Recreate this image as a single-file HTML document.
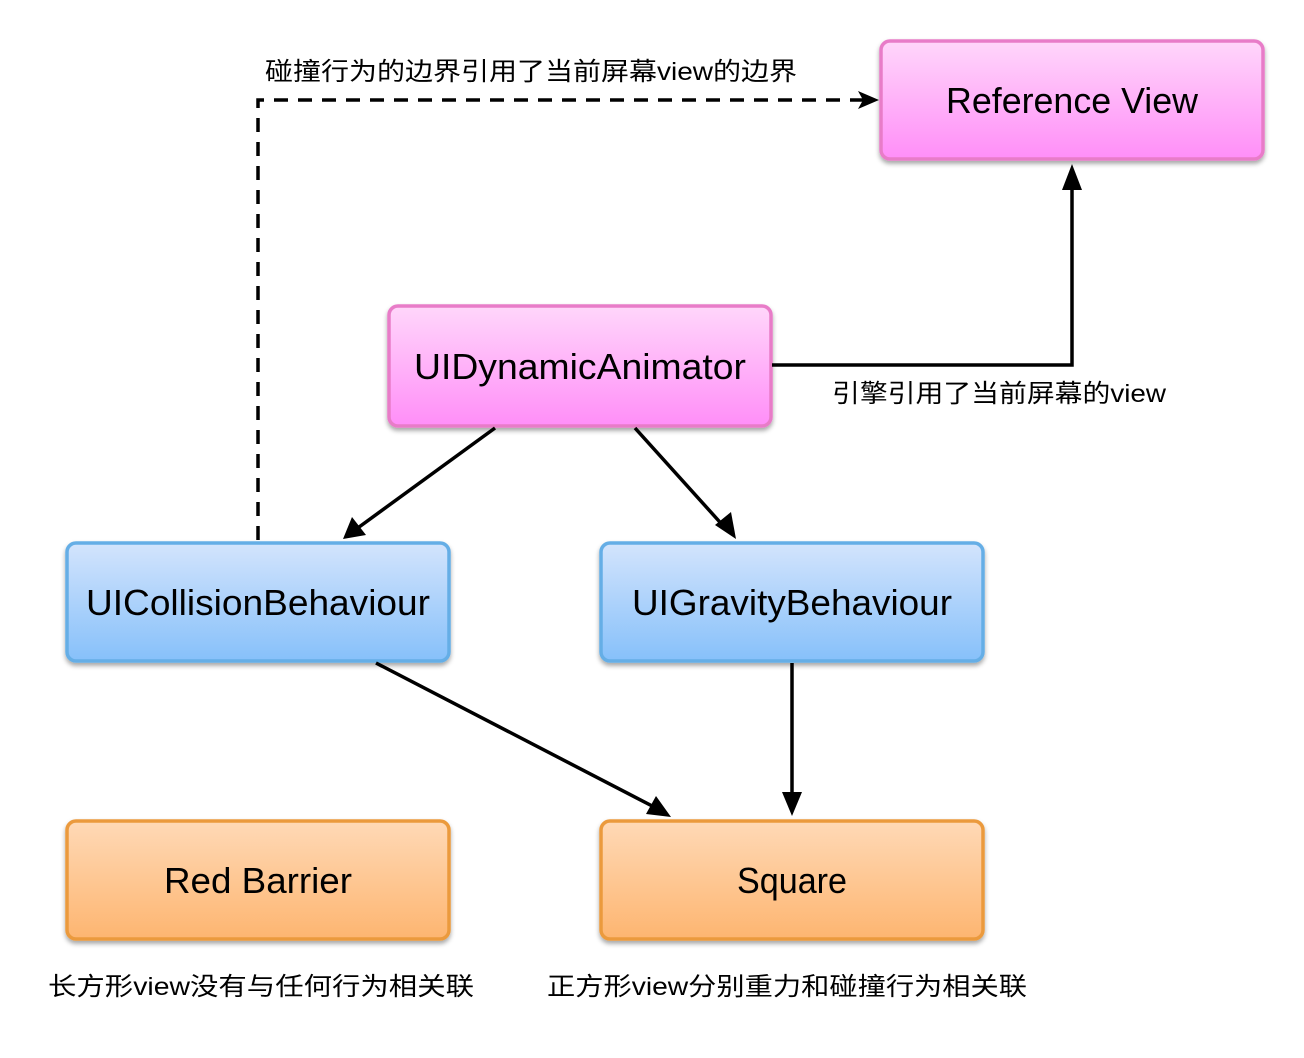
<!DOCTYPE html>
<html><head><meta charset="utf-8"><style>
html,body{margin:0;padding:0;background:#fff;}
svg{display:block;}
.t{font-family:"Liberation Sans",sans-serif;font-size:36px;fill:#000;}
.c{font-family:"Liberation Sans","Noto Sans CJK SC",sans-serif;font-size:25px;fill:#000;}
</style></head><body>
<svg width="1304" height="1058" viewBox="0 0 1304 1058">
<defs>
<linearGradient id="pk" x1="0" y1="0" x2="0" y2="1"><stop offset="0" stop-color="#ffd6fa"/><stop offset="1" stop-color="#ff8ef8"/></linearGradient>
<linearGradient id="bl" x1="0" y1="0" x2="0" y2="1"><stop offset="0" stop-color="#d3e4fc"/><stop offset="1" stop-color="#86c0fa"/></linearGradient>
<linearGradient id="or" x1="0" y1="0" x2="0" y2="1"><stop offset="0" stop-color="#ffd9b6"/><stop offset="1" stop-color="#fdb570"/></linearGradient>
<filter id="sh" x="-10%" y="-10%" width="120%" height="130%"><feDropShadow dx="0" dy="3" stdDeviation="2.5" flood-color="#000" flood-opacity="0.35"/></filter>
</defs>
<g filter="url(#sh)" stroke-width="3.5">
<rect x="881" y="41" width="382" height="118" rx="9" fill="url(#pk)" stroke="#e87cc8"/>
<rect x="389" y="306" width="382" height="120" rx="9" fill="url(#pk)" stroke="#e87cc8"/>
<rect x="67" y="543" width="382" height="118" rx="9" fill="url(#bl)" stroke="#65aee6"/>
<rect x="601" y="543" width="382" height="118" rx="9" fill="url(#bl)" stroke="#65aee6"/>
<rect x="67" y="821" width="382" height="118" rx="9" fill="url(#or)" stroke="#eb9a3c"/>
<rect x="601" y="821" width="382" height="118" rx="9" fill="url(#or)" stroke="#eb9a3c"/>
</g>
<text class="t" x="1072" y="113" text-anchor="middle" textLength="252" lengthAdjust="spacingAndGlyphs">Reference View</text>
<text class="t" x="580" y="379" text-anchor="middle" textLength="332" lengthAdjust="spacingAndGlyphs">UIDynamicAnimator</text>
<text class="t" x="258" y="615" text-anchor="middle" textLength="344" lengthAdjust="spacingAndGlyphs">UICollisionBehaviour</text>
<text class="t" x="792" y="615" text-anchor="middle" textLength="320" lengthAdjust="spacingAndGlyphs">UIGravityBehaviour</text>
<text class="t" x="258" y="893" text-anchor="middle" textLength="188" lengthAdjust="spacingAndGlyphs">Red Barrier</text>
<text class="t" x="792" y="893" text-anchor="middle" textLength="110" lengthAdjust="spacingAndGlyphs">Square</text>
<g fill="none" stroke="#000" stroke-width="3.5">
<path d="M258,540 V100 H866" stroke-dasharray="14,10"/>
<path d="M772,365 H1072 V170" />
<path d="M495,428 L355,530"/>
<path d="M635,428 L727,530"/>
<path d="M376,663 L658,809"/>
<path d="M792,663 V800"/>
</g>
<g fill="#000">
<path d="M879,100 L858,91 L863,100 L858,109 z"/>
<path d="M1072,164 L1062,190 L1082,190 z"/>
<path d="M343,539 L352,517 L366,535 z"/>
<path d="M736,539 L715,525 L731,512 z"/>
<path d="M671,817 L646,814 L656,796 z"/>
<path d="M792,816 L782,792 L802,792 z"/>
</g>
<text class="c" x="265" y="80" textLength="532" lengthAdjust="spacingAndGlyphs">碰撞行为的边界引用了当前屏幕view的边界</text>
<text class="c" x="832" y="402" textLength="334" lengthAdjust="spacingAndGlyphs">引擎引用了当前屏幕的view</text>
<text class="c" x="48" y="995" textLength="426" lengthAdjust="spacingAndGlyphs">长方形view没有与任何行为相关联</text>
<text class="c" x="547" y="995" textLength="480" lengthAdjust="spacingAndGlyphs">正方形view分别重力和碰撞行为相关联</text>
</svg>
</body></html>
